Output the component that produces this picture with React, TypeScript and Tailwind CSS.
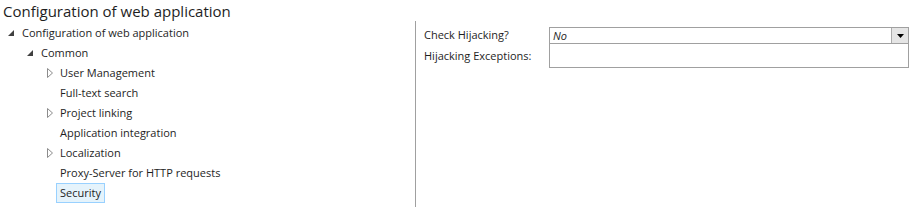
import React from 'react'

type Node = { label: string; level: number; state?: 'open' | 'closed'; selected?: boolean }

const nodes: Node[] = [
  { label: 'Configuration of web application', level: 0, state: 'open' },
  { label: 'Common', level: 1, state: 'open' },
  { label: 'User Management', level: 2, state: 'closed' },
  { label: 'Full-text search', level: 2 },
  { label: 'Project linking', level: 2, state: 'closed' },
  { label: 'Application integration', level: 2 },
  { label: 'Localization', level: 2, state: 'closed' },
  { label: 'Proxy-Server for HTTP requests', level: 2 },
  { label: 'Security', level: 2, selected: true },
]

const indent = ['pl-[5px]', 'pl-[24px]', 'pl-[43px]']

function Arrow({ state }: { state?: 'open' | 'closed' }) {
  if (state === 'open') {
    return (
      <svg width="14" height="14" viewBox="0 0 14 14" className="shrink-0">
        <path d="M9 4 L9 10 L3 10 Z" fill="#404040" />
      </svg>
    )
  }
  if (state === 'closed') {
    return (
      <svg width="14" height="14" viewBox="0 0 14 14" className="shrink-0">
        <path d="M4.5 2.5 L9.5 7 L4.5 11.5 Z" fill="none" stroke="#8c8c8c" strokeWidth="1" />
      </svg>
    )
  }
  return <span className="w-[14px] shrink-0" />
}

export default function App() {
  return (
    <div className="w-[913px] h-[207px] bg-white overflow-hidden text-[#1e1e1e] font-['Open_Sans',sans-serif]">
      {/* Header */}
      <div className="h-[21px] pl-[3px] text-[15px] leading-[22px] whitespace-nowrap">
        Configuration of web application
      </div>

      <div className="flex h-[186px]">
        {/* Tree */}
        <div className="w-[416px] border-r border-[#a0a0a0] pt-[2px]">
          {nodes.map((n) => (
            <div key={n.label} className={`flex items-center h-[20px] ${indent[n.level]}`}>
              <Arrow state={n.state} />
              <span
                className={`ml-[-1px] px-[3px] h-[20px] leading-[18px] text-[11px] whitespace-nowrap border ${
                  n.selected ? 'bg-[#e5f3fb] border-[#99d1ff]' : 'border-transparent'
                }`}
              >
                {n.label}
              </span>
            </div>
          ))}
        </div>

        {/* Detail */}
        <div className="flex-1 pl-[8px] pr-[4px] pt-[6px]">
          <div className="grid grid-cols-[125px_1fr] text-[11px]">
            <div className="h-[17px] flex items-center">Check Hijacking?</div>
            <div className="h-[17px] border border-[#a0a0a0] flex">
              <span className="flex-1 pl-[3px] italic leading-[15px]">No</span>
              <div className="w-[17px] h-[15px] bg-[#e5e5e5] border-l border-[#acacac] flex items-center justify-center">
                <svg width="7" height="4" viewBox="0 0 7 4">
                  <path d="M0 0 L7 0 L3.5 4 Z" fill="#000" />
                </svg>
              </div>
            </div>
            <div className="h-[24px] flex items-center">Hijacking Exceptions:</div>
            <div className="h-[24px] border border-t-0 border-[#a0a0a0]" />
          </div>
        </div>
      </div>
    </div>
  )
}
